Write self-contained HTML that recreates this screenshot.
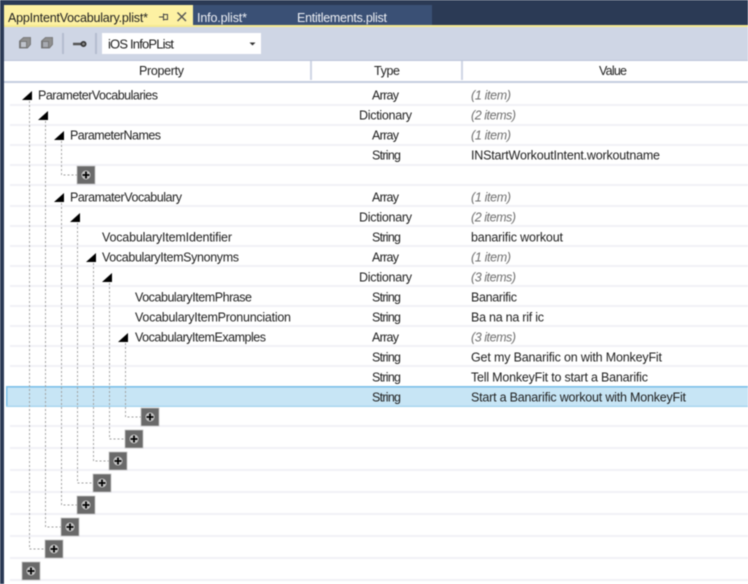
<!DOCTYPE html>
<html><head><meta charset="utf-8"><style>
html,body{margin:0;padding:0;width:748px;height:584px;overflow:hidden;background:#fff}
svg{display:block;filter:blur(.45px)}
text{font-family:"Liberation Sans",sans-serif;font-size:12.5px;fill:#1e1e1e}
.i{font-style:italic;fill:#6e6e6e}
.t{fill:#eef0f5}
</style></head><body>
<svg width="748" height="584" viewBox="0 0 748 584" xmlns="http://www.w3.org/2000/svg">
<defs>
<g id="b"><rect x="0" y="0" width="18" height="18" fill="#6a6a6a" stroke="#c4c4c4" stroke-width=".8"/><circle cx="9" cy="9" r="4.500" fill="#c8c8c8"/><path d="M9 5.500v7M5.500 9h7" stroke="#000" stroke-width="1.800"/></g>
<path id="e" d="M10 0V9H0Z" fill="#000"/>
</defs>
<rect width="748" height="584" fill="#fff"/>
<rect width="748" height="27" fill="#2b3a55"/>
<rect x="0" width="4" height="584" fill="#2b3a55"/>
<rect x="193" y="5" width="239" height="21" fill="#3a5075"/>
<rect x="4" y="5" width="189" height="22" fill="#fdf1a3"/>
<rect x="4" y="25" width="744" height="2" fill="#f5e98f"/>
<rect x="4" y="27" width="744" height="33" fill="#cfd6e5"/>
<rect x="4" y="60" width="744" height="1" fill="#bcc5da"/>
<rect x="4" y="81" width="744" height="2" fill="#c5cde0"/>
<rect x="310" y="61" width="2" height="19" fill="#cfd6e5"/>
<rect x="461" y="61" width="2" height="19" fill="#cfd6e5"/>

<text x="8" y="22" textLength="140">AppIntentVocabulary.plist*</text>
<path d="M159 17h4M163.500 13.500v7M163.500 14.500h4v5h-4" stroke="#444" stroke-width="1" fill="none"/>
<path d="M177.500 12.500l8.500 8.500M186 12.500l-8.500 8.500" stroke="#555" stroke-width="1.400"/>
<text class="t" x="197" y="22" textLength="50">Info.plist*</text>
<text class="t" x="297" y="22" textLength="90">Entitlements.plist</text>

<g fill="#8f8f8f" stroke="#6e6e6e" stroke-width=".8">
<path d="M23.500 37.500h7v7l-3 3.500h-8v-7z"/><rect x="20.500" y="41.500" width="6" height="6" fill="#c0c4cc"/>
<path d="M45.500 37.500h7v7l-3 3.500h-8v-7z"/><rect x="42.500" y="41.500" width="6" height="6" fill="#a8abb2"/>
</g>
<rect x="62" y="33" width="2" height="21" fill="#b4bccf"/>
<path d="M73 44h8" stroke="#555" stroke-width="2.500"/><circle cx="83.500" cy="44" r="2.200" fill="#888" stroke="#333" stroke-width="1.600"/>
<rect x="95" y="33" width="2" height="21" fill="#b4bccf"/>
<rect x="102" y="33" width="159" height="21" fill="#fff"/>
<text x="108" y="48.500" textLength="66" style="font-size:13px">iOS InfoPList</text>
<path d="M249.500 42.500h6l-3 3z" fill="#333"/>

<text x="139" y="75" textLength="45">Property</text>
<text x="374" y="75" textLength="26">Type</text>
<text x="599" y="75" textLength="28">Value</text>

<g fill="#f1f1f6">
<rect x="10" y="104" width="738" height="2"/><rect x="10" y="124" width="738" height="2"/><rect x="10" y="144" width="738" height="2"/><rect x="10" y="164" width="738" height="2"/><rect x="10" y="184" width="738" height="2"/><rect x="10" y="205" width="738" height="2"/><rect x="10" y="225" width="738" height="2"/><rect x="10" y="245" width="738" height="2"/><rect x="10" y="265" width="738" height="2"/><rect x="10" y="285" width="738" height="2"/><rect x="10" y="305" width="738" height="2"/><rect x="10" y="325" width="738" height="2"/><rect x="10" y="345" width="738" height="2"/><rect x="10" y="365" width="738" height="2"/><rect x="10" y="425" width="738" height="2"/><rect x="10" y="447" width="738" height="2"/><rect x="10" y="469" width="738" height="2"/><rect x="10" y="491" width="738" height="2"/><rect x="10" y="513" width="738" height="2"/><rect x="10" y="535" width="738" height="2"/><rect x="10" y="557" width="738" height="2"/><rect x="10" y="579" width="738" height="2"/>
</g>
<rect x="6" y="386" width="742" height="21" fill="#c7e5f5"/>
<rect x="6" y="386" width="742" height="1.600" fill="#7cc0e8"/>
<rect x="6" y="386" width="1.500" height="21" fill="#7cc0e8"/>
<rect x="6" y="405.800" width="742" height="1.200" fill="#a0d2ee"/>

<g fill="none" stroke="#a0a0a0" stroke-width="1" stroke-dasharray="2 2">
<path d="M29.500 101V549H45"/>
<path d="M45.500 121V527H61"/>
<path d="M61.500 141V175H77"/>
<path d="M61.500 203V505H77"/>
<path d="M77.500 223V483H93"/>
<path d="M93.500 263V461H109"/>
<path d="M109.500 283V439H125"/>
<path d="M125.500 343V417H141"/>
</g>

<use href="#e" x="22" y="91"/><use href="#e" x="38" y="111"/><use href="#e" x="54" y="131"/><use href="#e" x="54" y="193"/><use href="#e" x="70" y="213"/><use href="#e" x="86" y="253"/><use href="#e" x="102" y="273"/><use href="#e" x="118" y="333"/>

<use href="#b" x="77" y="166"/><use href="#b" x="141" y="408"/><use href="#b" x="125" y="430"/><use href="#b" x="109" y="452"/><use href="#b" x="93" y="474"/><use href="#b" x="77" y="496"/><use href="#b" x="61" y="518"/><use href="#b" x="45" y="540"/><use href="#b" x="22" y="562"/>

<text x="38" y="99.500" textLength="120">ParameterVocabularies</text>
<text x="70" y="139.500" textLength="91">ParameterNames</text>
<text x="70" y="201.500" textLength="112">ParamaterVocabulary</text>
<text x="102" y="241.500" textLength="130">VocabularyItemIdentifier</text>
<text x="102" y="261.500" textLength="137">VocabularyItemSynonyms</text>
<text x="135" y="301.500" textLength="117">VocabularyItemPhrase</text>
<text x="135" y="321.500" textLength="156">VocabularyItemPronunciation</text>
<text x="135" y="341.500" textLength="131">VocabularyItemExamples</text>

<text x="372" y="99.500" textLength="27">Array</text>
<text x="359" y="119.500" textLength="53">Dictionary</text>
<text x="372" y="139.500" textLength="27">Array</text>
<text x="372" y="159.500" textLength="29">String</text>
<text x="372" y="201.500" textLength="27">Array</text>
<text x="359" y="221.500" textLength="53">Dictionary</text>
<text x="372" y="241.500" textLength="29">String</text>
<text x="372" y="261.500" textLength="27">Array</text>
<text x="359" y="281.500" textLength="53">Dictionary</text>
<text x="372" y="301.500" textLength="29">String</text>
<text x="372" y="321.500" textLength="29">String</text>
<text x="372" y="341.500" textLength="27">Array</text>
<text x="372" y="361.500" textLength="29">String</text>
<text x="372" y="381.500" textLength="29">String</text>
<text x="372" y="401.500" textLength="29">String</text>

<text class="i" x="471" y="99.500" textLength="40">(1 item)</text>
<text class="i" x="471" y="119.500" textLength="45">(2 items)</text>
<text class="i" x="471" y="139.500" textLength="40">(1 item)</text>
<text x="471" y="159.500" textLength="189">INStartWorkoutIntent.workoutname</text>
<text class="i" x="471" y="201.500" textLength="40">(1 item)</text>
<text class="i" x="471" y="221.500" textLength="45">(2 items)</text>
<text x="471" y="241.500" textLength="92">banarific workout</text>
<text class="i" x="471" y="261.500" textLength="40">(1 item)</text>
<text class="i" x="471" y="281.500" textLength="45">(3 items)</text>
<text x="471" y="301.500" textLength="46">Banarific</text>
<text x="471" y="321.500" textLength="73">Ba na na rif ic</text>
<text class="i" x="471" y="341.500" textLength="45">(3 items)</text>
<text x="471" y="361.500" textLength="191">Get my Banarific on with MonkeyFit</text>
<text x="471" y="381.500" textLength="177">Tell MonkeyFit to start a Banarific</text>
<text x="471" y="401.500" textLength="215">Start a Banarific workout with MonkeyFit</text>
</svg>
</body></html>
